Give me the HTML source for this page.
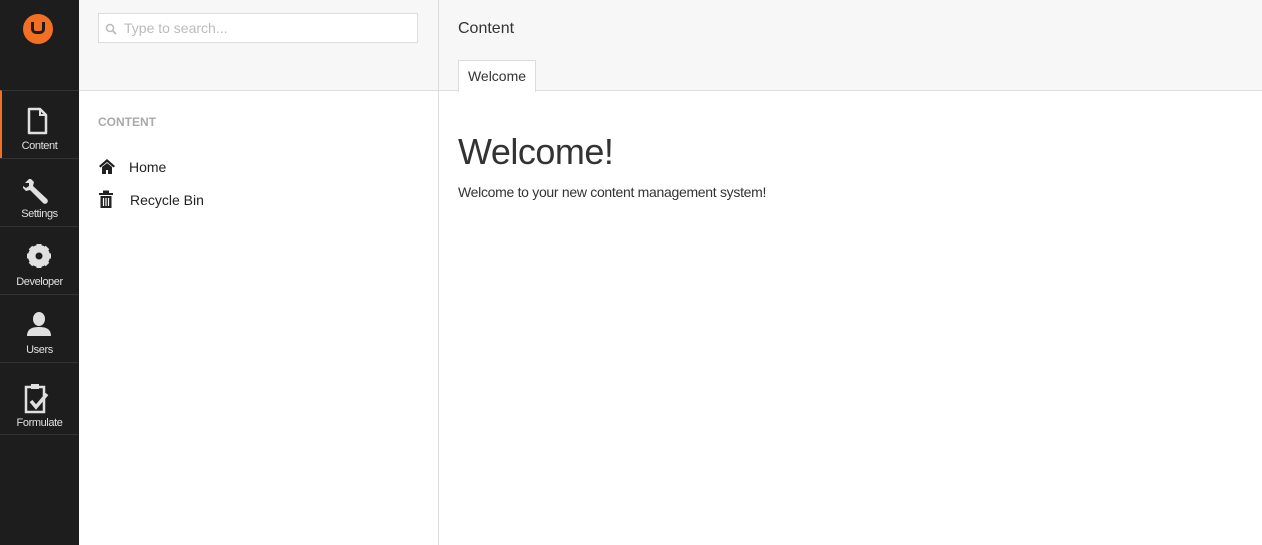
<!DOCTYPE html>
<html><head><style>
*{margin:0;padding:0;box-sizing:border-box}
body{width:1262px;height:545px;overflow:hidden;font-family:"Liberation Sans",sans-serif;background:#fff;position:relative}
#side{position:absolute;left:0;top:0;width:79px;height:545px;background:#1d1d1d}
.logo{position:absolute;left:23px;top:14px;width:30px;height:30px;border-radius:50%;background:#f36f21}
.logo i{position:absolute;left:8px;top:8px;width:14px;height:12px;border:3px solid #1d1d1d;border-top:none;border-radius:0 0 5px 5px}
.item{position:absolute;left:0;width:79px;height:68px;border-top:1px solid #333;color:#e0e0e0;font-size:11px;text-align:center}
.item svg{position:absolute;left:26px;top:16px}
.item span{position:absolute;left:0;right:0;top:49px;letter-spacing:-.4px}
#tree{position:absolute;left:79px;top:0;width:360px;height:545px;border-right:1px solid #ddd}
#tree .hd{height:91px;background:#f7f7f7;border-bottom:1px solid #ddd;position:relative}
.search{position:absolute;left:19px;top:13px;width:320px;height:30px;border:1px solid #ddd;background:#fff;color:#bbb;font-size:14px;line-height:28px;padding-left:25px}
.search svg{position:absolute;left:6px;top:9px}
.sec{position:absolute;left:19px;top:115px;font-size:12px;font-weight:bold;color:#aaa}
.node{position:absolute;left:19px;font-size:14px;color:#222}
#main{position:absolute;left:439px;top:0;right:0;height:545px}
#main .hd{height:91px;background:#f7f7f7;border-bottom:1px solid #ddd;position:relative}
.title{position:absolute;left:19px;top:20px;font-size:16px;color:#333}
.tab{position:absolute;left:19px;top:60px;width:78px;height:32px;background:#fff;border:1px solid #ddd;border-bottom:none;font-size:14px;color:#333;text-align:center;line-height:31px}
h1{position:absolute;left:19px;top:131px;font-size:36px;font-weight:normal;color:#333;letter-spacing:-.5px}
p{position:absolute;left:19px;top:184px;font-size:14px;color:#333;letter-spacing:-.3px}
</style></head><body>
<div id="side">
<div class="logo"><i></i></div>
<div class="item" style="top:90px;border-left:2px solid #f36f21"><svg width="24" height="28" viewBox="0 0 24 28" style="left:24px"><path d="M3 2h11l6 6v18H3z" fill="none" stroke="#e0e0e0" stroke-width="2.5" stroke-linejoin="round"/><path d="M14 2v6h6" fill="none" stroke="#e0e0e0" stroke-width="2"/></svg><span style="margin-left:-2px">Content</span></div>
<div class="item" style="top:158px"><svg width="28" height="28" viewBox="0 0 28 28" style="left:23px;top:18px"><path d="M2 6l4-4 2 0 3 3-1 4 14 13a2 2 0 0 1-4 4L7 13l-4 1-3-3 0-2 3 2 3-2 0-3z" fill="#e0e0e0"/></svg><span>Settings</span></div>
<div class="item" style="top:226px"><svg width="26" height="26" viewBox="0 0 26 26"><circle cx="13" cy="13" r="8" fill="none" stroke="#e0e0e0" stroke-width="6"/><g stroke="#e0e0e0" stroke-width="5"><path d="M13 1v24M1 13h24M4.5 4.5l17 17M21.5 4.5l-17 17"/></g><circle cx="13" cy="13" r="3.5" fill="#1d1d1d"/></svg><span>Developer</span></div>
<div class="item" style="top:294px"><svg width="26" height="26" viewBox="0 0 26 26"><ellipse cx="13" cy="8" rx="6" ry="7" fill="#e0e0e0"/><path d="M1 25c0-7 5-9 12-9s12 2 12 9z" fill="#e0e0e0"/></svg><span>Users</span></div>
<div class="item" style="top:362px;height:73px;border-bottom:1px solid #333"><svg width="26" height="32" viewBox="0 0 26 32" style="top:20px;left:24px"><rect x="2" y="4" width="18" height="25" fill="none" stroke="#e0e0e0" stroke-width="2.5"/><rect x="7" y="1" width="8" height="5" fill="#e0e0e0"/><path d="M7 18l5 6 11-13" fill="none" stroke="#e0e0e0" stroke-width="3.5"/></svg><span style="top:54px">Formulate</span></div>
</div>
<div id="tree"><div class="hd"><div class="search"><svg width="12" height="12" viewBox="0 0 12 12"><circle cx="5" cy="5" r="3.5" fill="none" stroke="#bbb" stroke-width="1.5"/><path d="M7.5 7.5l3.5 3.5" stroke="#bbb" stroke-width="1.8"/></svg>Type to search...</div></div>
<div class="sec">CONTENT</div>
<div class="node" style="top:158px"><svg width="18" height="16" viewBox="0 0 18 16" style="vertical-align:-2px;margin-right:13px"><path d="M1 8L9 1l8 7-1.5 1.5L9 4 2.5 9.5z" fill="#222"/><path d="M4 9l5-4 5 4v7h-4v-4H8v4H4z" fill="#222"/></svg>Home</div>
<div class="node" style="top:190px"><svg width="16" height="18" viewBox="0 0 16 18" style="vertical-align:-3px;margin-right:16px"><rect x="1" y="3" width="14" height="2" fill="#222"/><rect x="5" y="0.5" width="6" height="2.5" fill="#222"/><path d="M2.5 6h11v12h-11z" fill="#222"/><path d="M5.5 8v8M8 8v8M10.5 8v8" stroke="#fff" stroke-width="1.2"/></svg>Recycle Bin</div>
</div>
<div id="main"><div class="hd"><div class="title">Content</div><div class="tab">Welcome</div></div>
<h1>Welcome!</h1><p>Welcome to your new content management system!</p></div>
</body></html>
